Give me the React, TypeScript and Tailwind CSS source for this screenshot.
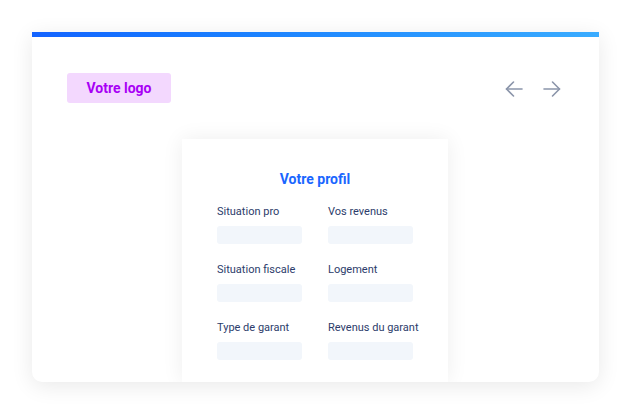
import React from "react";

const fields = [
  "Situation pro",
  "Vos revenus",
  "Situation fiscale",
  "Logement",
  "Type de garant",
  "Revenus du garant",
];

function Arrow({ dir }: { dir: "left" | "right" }) {
  return (
    <svg width="18" height="18" viewBox="0 0 18 18" fill="none" stroke="#8b95aa" strokeWidth="1.6" strokeLinecap="round" strokeLinejoin="round">
      {dir === "left" ? (
        <>
          <path d="M17 9H1.5" />
          <path d="M8.5 2L1.5 9l7 7" />
        </>
      ) : (
        <>
          <path d="M1 9h15.5" />
          <path d="M9.5 2l7 7-7 7" />
        </>
      )}
    </svg>
  );
}

export default function App() {
  return (
    <div className="w-[631px] h-[414px] bg-white pt-[32px] pl-[32px]" style={{ fontFamily: "Roboto, 'Liberation Sans', sans-serif" }}>
      <div className="w-[567px] h-[350px] bg-white rounded-b-[10px] shadow-[0_4px_22px_rgba(0,0,0,0.09)] overflow-hidden flex flex-col">
        <div className="h-[5px] shrink-0 bg-gradient-to-r from-[#1463ff] to-[#3aacff]" />
        <div className="mt-[36px] h-[30px] shrink-0 flex items-center justify-between pl-[35px] pr-[38px]">
          <div className="w-[104px] h-[30px] rounded-[3px] bg-[#f3d8fe] flex items-center justify-center text-[14px] font-bold text-[#a800f5]">
            Votre logo
          </div>
          <div className="flex items-center gap-[20px] mt-[2px]">
            <Arrow dir="left" />
            <Arrow dir="right" />
          </div>
        </div>
        <div className="mt-[36px] ml-[150px] w-[266px] flex-1 bg-white shadow-[0_0_20px_rgba(0,0,0,0.07)] pt-[30px] px-[35px]">
          <div className="text-center text-[14px] leading-[20px] font-bold text-[#1a66ff]">Votre profil</div>
          <div className="mt-[16px] grid grid-cols-[85px_85px] gap-x-[26px] gap-y-[19px]">
            {fields.map((f) => (
              <div key={f}>
                <div className="text-[11px] leading-[14px] text-[#2c3c6b] whitespace-nowrap">{f}</div>
                <div className="mt-[7px] h-[18px] rounded-[3px] bg-[#f2f6fb]" />
              </div>
            ))}
          </div>
        </div>
      </div>
    </div>
  );
}
